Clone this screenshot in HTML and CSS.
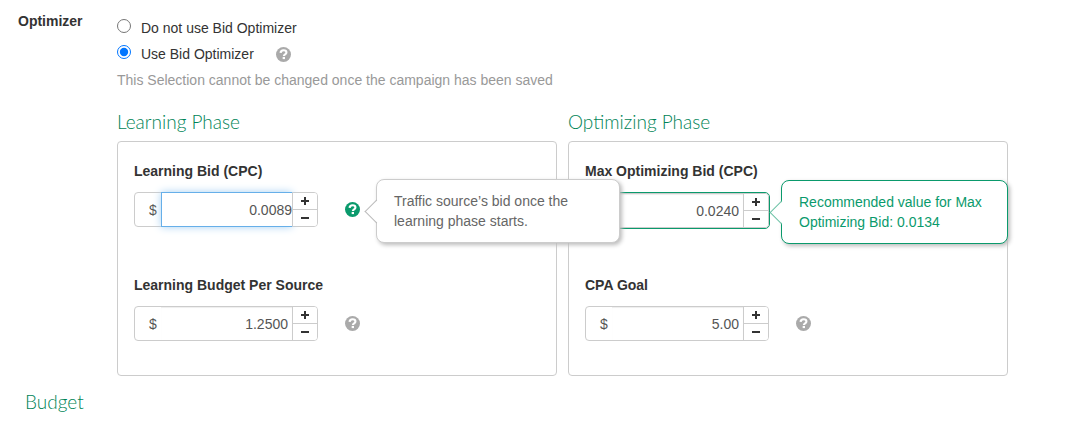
FILE: index.html
```
<!DOCTYPE html>
<html lang="en">
<head>
<meta charset="utf-8">
<title>Campaign bid optimizer</title>
<link rel="stylesheet" href="styles.css">
</head>
<body>
<svg class="sprite" aria-hidden="true">
  <symbol id="help" viewBox="0 0 16 16">
    <circle cx="8" cy="8" r="8" fill="currentColor"/>
    <path d="M4.900 6.300C5 4.300 6.300 3.500 8.100 3.500c1.800 0 3 .9 3 2.400 0 2-2.700 1.800-2.700 3.700" fill="none" stroke="#fff" stroke-width="2.300"/>
    <rect x="7.100" y="10.600" width="2.500" height="2.300" fill="#fff"/>
  </symbol>
</svg>
<main class="page">
  <form class="row">
    <h2 class="row-label">Optimizer</h2>
    <div class="row-body">
      <div class="choices" role="radiogroup" aria-label="Optimizer">
        <div class="choice">
          <input type="radio" name="optimizer" id="opt-off">
          <label for="opt-off">Do not use Bid Optimizer</label>
        </div>
        <div class="choice">
          <input type="radio" name="optimizer" id="opt-on" checked>
          <label for="opt-on">Use Bid Optimizer</label>
          <button type="button" class="help" aria-label="Help"><svg><use href="#help"/></svg></button>
        </div>
      </div>
      <p class="note">This Selection cannot be changed once the campaign has been saved</p>
      <div class="phases">
        <section class="phase">
          <h3 class="heading">Learning Phase</h3>
          <div class="panel">
            <div class="field">
              <label class="field-label" for="learning-bid">Learning Bid (CPC)</label>
              <div class="field-row">
                <div class="group">
                  <span class="currency">$</span>
                  <input class="amount amount-active" id="learning-bid" type="text" value="0.0089">
                  <div class="stepper">
                    <button type="button" class="step step-up" aria-label="Increase"></button>
                    <button type="button" class="step" aria-label="Decrease"></button>
                  </div>
                </div>
                <div class="anchor">
                  <button type="button" class="help help-active" aria-label="Help"><svg><use href="#help"/></svg></button>
                  <div class="tip tip-help" role="tooltip">Traffic source’s bid once the learning phase starts.</div>
                </div>
              </div>
            </div>
            <div class="field">
              <label class="field-label" for="learning-budget">Learning Budget Per Source</label>
              <div class="field-row">
                <div class="group">
                  <span class="currency">$</span>
                  <input class="amount" id="learning-budget" type="text" value="1.2500">
                  <div class="stepper">
                    <button type="button" class="step step-up" aria-label="Increase"></button>
                    <button type="button" class="step" aria-label="Decrease"></button>
                  </div>
                </div>
                <button type="button" class="help" aria-label="Help"><svg><use href="#help"/></svg></button>
              </div>
            </div>
          </div>
        </section>
        <section class="phase">
          <h3 class="heading">Optimizing Phase</h3>
          <div class="panel">
            <div class="field">
              <label class="field-label" for="max-bid">Max Optimizing Bid (CPC)</label>
              <div class="field-row">
                <div class="anchor highlight">
                  <div class="group">
                    <span class="currency">$</span>
                    <input class="amount" id="max-bid" type="text" value="0.0240">
                    <div class="stepper">
                      <button type="button" class="step step-up" aria-label="Increase"></button>
                      <button type="button" class="step" aria-label="Decrease"></button>
                    </div>
                  </div>
                  <div class="tip tip-value" role="tooltip">Recommended value for Max Optimizing Bid: 0.0134</div>
                </div>
              </div>
            </div>
            <div class="field">
              <label class="field-label" for="cpa-goal">CPA Goal</label>
              <div class="field-row">
                <div class="group">
                  <span class="currency">$</span>
                  <input class="amount" id="cpa-goal" type="text" value="5.00">
                  <div class="stepper">
                    <button type="button" class="step step-up" aria-label="Increase"></button>
                    <button type="button" class="step" aria-label="Decrease"></button>
                  </div>
                </div>
                <button type="button" class="help" aria-label="Help"><svg><use href="#help"/></svg></button>
              </div>
            </div>
          </div>
        </section>
      </div>
    </div>
  </form>
  <h3 class="heading heading-section">Budget</h3>
</main>
</body>
</html>
```
FILE: styles.css
```
* { box-sizing: border-box; }
body {
  margin: 0;
  background: #fff;
  color: #333;
  font: 14px/20px "Liberation Sans", Arial, sans-serif;
}
.sprite { display: none; }
.page { padding: 11px 84px 0 18px; }
.row { display: flex; }
.row-label {
  flex: 0 0 99px;
  margin: 0;
  font-size: 14px;
  line-height: 20px;
}
.row-body { flex: 1; min-width: 0; }
.choices { display: flex; flex-direction: column; gap: 6px; padding-top: 7px; }
.choice { display: flex; align-items: center; }
.choice input { width: 14px; height: 14px; margin: 0 10px 4px 0; }
.choice .help { margin-left: 22px; }
.note { margin: 6px 0 0; color: #999; }
.help {
  display: block;
  width: 15px;
  height: 15px;
  padding: 0;
  border: 0;
  background: none;
  color: #aaa;
}
.help svg { display: block; width: 15px; height: 15px; }
.help-active { color: #0a9a6c; }
.phases {
  display: grid;
  grid-template-columns: 1fr 1fr;
  gap: 11px;
  margin-top: 20px;
}
.heading {
  margin: 0;
  color: #008457;
  font: 300 19px/24px Lato, "Open Sans", sans-serif;
}
.heading-section { margin: 14px 0 0 7px; }
.panel {
  display: flex;
  flex-direction: column;
  gap: 48px;
  margin-top: 7px;
  padding: 19px 16px 34px;
  border: 1px solid #ccc;
  border-radius: 4px;
}
.field { height: 66px; }
.field-label { display: block; font-weight: bold; }
.field-row { display: flex; align-items: flex-start; margin-top: 11px; }
.field-row .help { margin: 10px 0 0 27px; }
.group {
  display: flex;
  width: 184px;
  height: 35px;
  border: 1px solid #ccc;
  border-radius: 4px;
}
.currency { width: 26px; padding: 7px 0 0 14px; color: #555; }
.amount {
  flex: 1;
  min-width: 0;
  margin: 0;
  padding: 0 4px;
  border: 0;
  background: #fff;
  color: #555;
  font: inherit;
  text-align: right;
  box-shadow: inset 0 1px 1px #eee;
  outline: none;
}
.amount-active {
  margin: -1px 0;
  padding-right: 0;
  border: 1px solid #66afe9;
  border-right: 0;
  box-shadow: 0 0 8px #a8d1f2;
}
.stepper {
  z-index: 1;
  display: grid;
  grid-template-rows: 1fr 1fr;
  width: 25px;
  border-left: 1px solid #ccc;
  border-radius: 0 3px 3px 0;
  background: #fff;
}
.step {
  display: grid;
  place-items: center;
  padding: 0;
  border: 0;
  background: none;
}
.step::before, .step-up::after {
  grid-area: 1 / 1;
  width: 8px;
  height: 2px;
  background: #333;
  content: "";
}
.step-up::after { width: 2px; height: 8px; }
.step-up { border-bottom: 1px solid #ccc; }
.anchor { position: relative; }
.highlight { margin: 0 -1px; border: 1px solid #0a9a6c; border-radius: 5px; }
.tip {
  position: absolute;
  z-index: 3;
  padding: 11px 17px;
  border: 1px solid #ccc;
  border-radius: 8px;
  background: #fff;
  box-shadow: 2px 2px 4px #bbb;
  color: #666;
}
.tip::before {
  position: absolute;
  top: 23px;
  left: -9px;
  width: 16px;
  height: 16px;
  border: 1px solid #bbb;
  border-width: 0 0 1px 1px;
  background: linear-gradient(45deg, #fff 50%, transparent 50%);
  transform: rotate(45deg);
  content: "";
}
.tip-help { top: -13px; left: 58px; width: 244px; }
.tip-value {
  z-index: 2;
  top: -13px;
  left: 196px;
  width: 227px;
  border-color: #0a9a6c;
  color: #0a9a6c;
}
.tip-value::before { border-color: #6cc2a6; }
```
